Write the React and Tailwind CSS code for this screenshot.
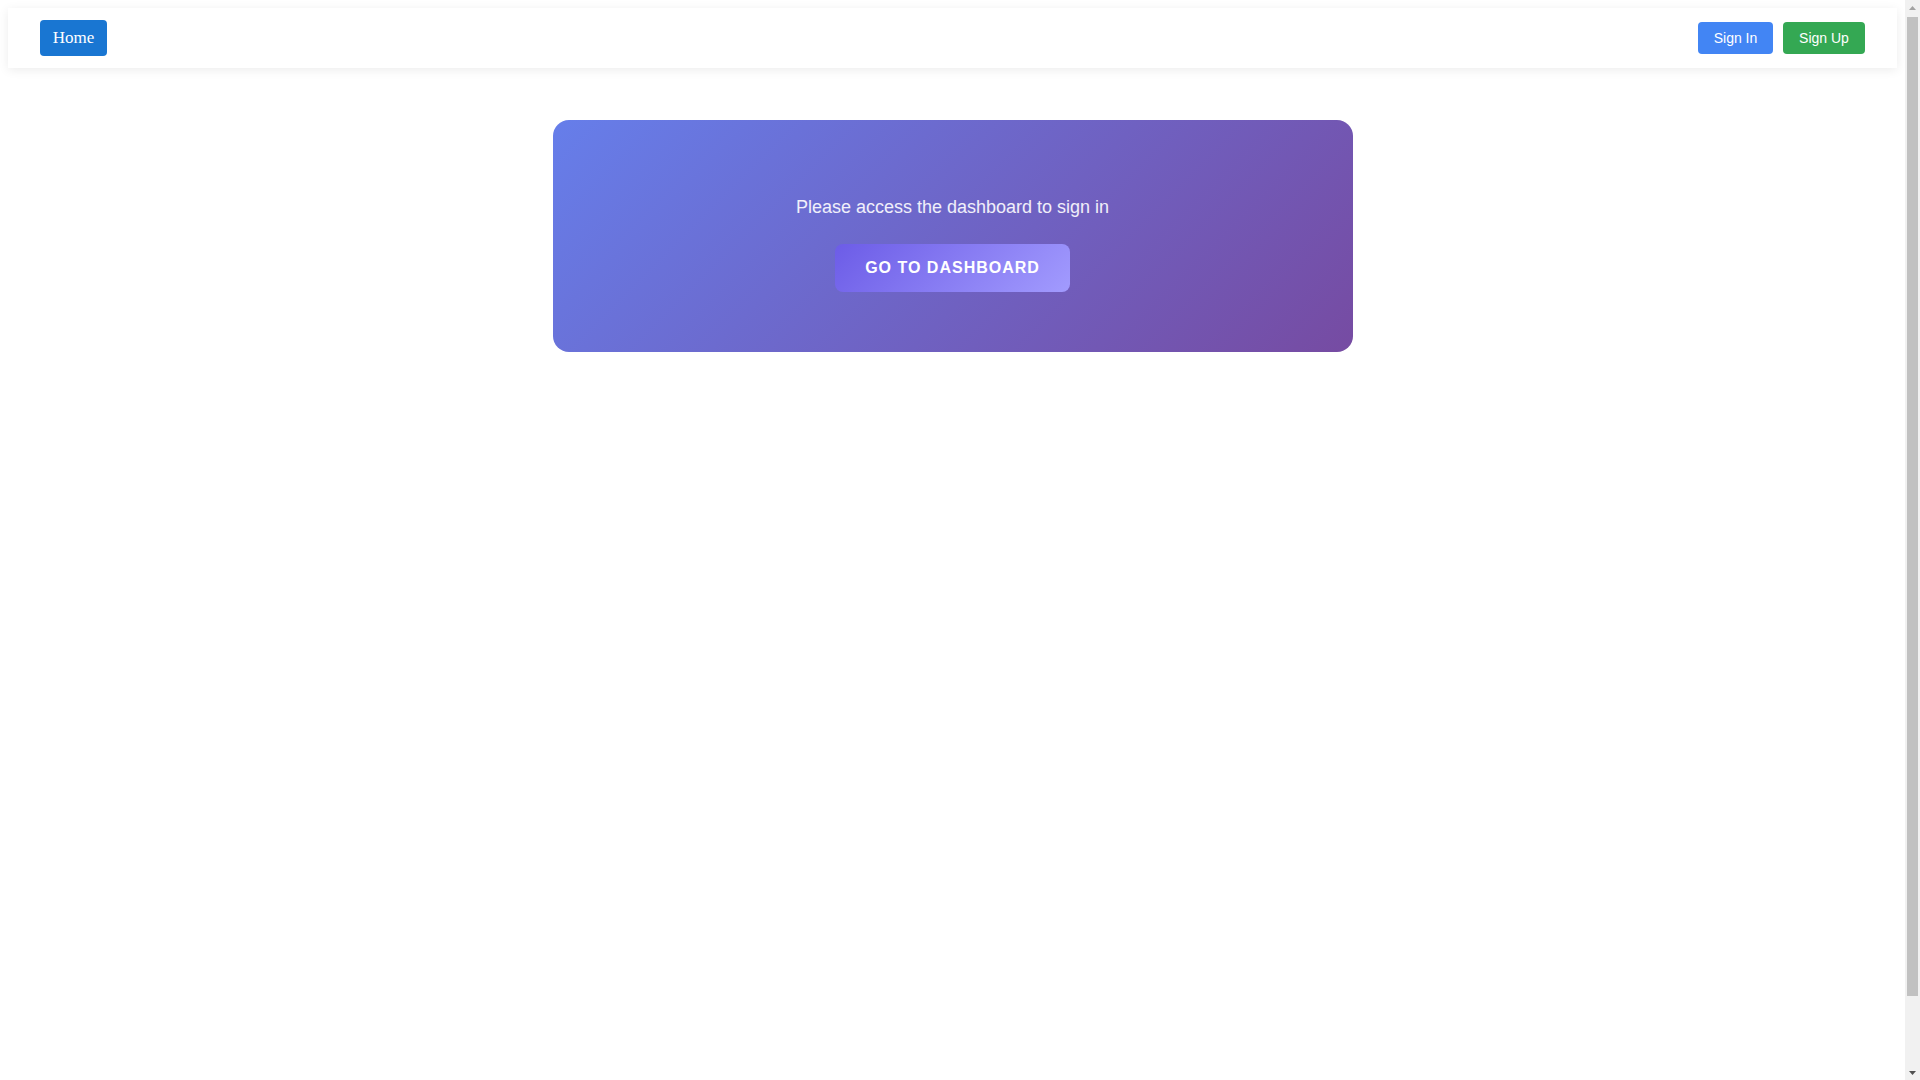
import React from 'react';

// Landing shell: top nav + sign-in prompt card
const NavBar = () => (
  <nav className="h-[60px] px-8 flex items-center justify-between bg-white shadow-[0_2px_10px_rgba(0,0,0,0.08)]">
    <a href="#" className="h-9 w-[67px] flex items-center justify-center rounded bg-[#1976d2] text-white text-[17px] font-['Liberation_Serif','Times_New_Roman',serif]">Home</a>
    <div className="flex items-center gap-[10px] font-['Liberation_Sans',Arial,sans-serif] text-[14px]">
      <button className="h-8 w-[75px] rounded bg-[#4285f4] text-white">Sign In</button>
      <button className="h-8 w-[82px] rounded bg-[#34a853] text-white">Sign Up</button>
    </div>
  </nav>
);

const SignInPrompt = () => (
  <div className="w-[800px] mx-auto rounded-2xl bg-[linear-gradient(135deg,#667eea_0%,#764ba2_100%)] pt-[77px] pb-[60px] flex flex-col items-center font-['Liberation_Sans',Arial,sans-serif]">
    <p className="text-[18px] leading-[21px] text-white/90">Please access the dashboard to sign in</p>
    <button className="mt-[26px] h-12 px-[30px] rounded-lg bg-[linear-gradient(135deg,#6c5ce7_0%,#a29bfe_100%)] text-white text-[16px] font-bold tracking-[1px] uppercase">
      Go to Dashboard
    </button>
  </div>
);

// browser's classic scrollbar, as seen in the capture
const ScrollBar = () => (
  <div className="w-[15px] shrink-0 flex flex-col bg-[#f1f1f1]">
    <div className="h-[15px] flex items-center justify-center">
      <svg width="7" height="4" viewBox="0 0 7 4"><path d="M0 4 L3.5 0 L7 4 Z" fill="#a3a3a3" /></svg>
    </div>
    <div className="mt-[2px] mx-[2px] h-[979px] bg-[#c1c1c1]" />
    <div className="flex-1" />
    <div className="h-[15px] flex items-center justify-center">
      <svg width="7" height="4" viewBox="0 0 7 4"><path d="M0 0 L7 0 L3.5 4 Z" fill="#505050" /></svg>
    </div>
  </div>
);

export default function App() {
  return (
    <div className="h-screen flex overflow-hidden bg-white">
      <div className="flex-1 min-w-0 p-2">
        <NavBar />
        <main className="min-h-screen pt-[52px]">
          <SignInPrompt />
        </main>
      </div>
      <ScrollBar />
    </div>
  );
}
